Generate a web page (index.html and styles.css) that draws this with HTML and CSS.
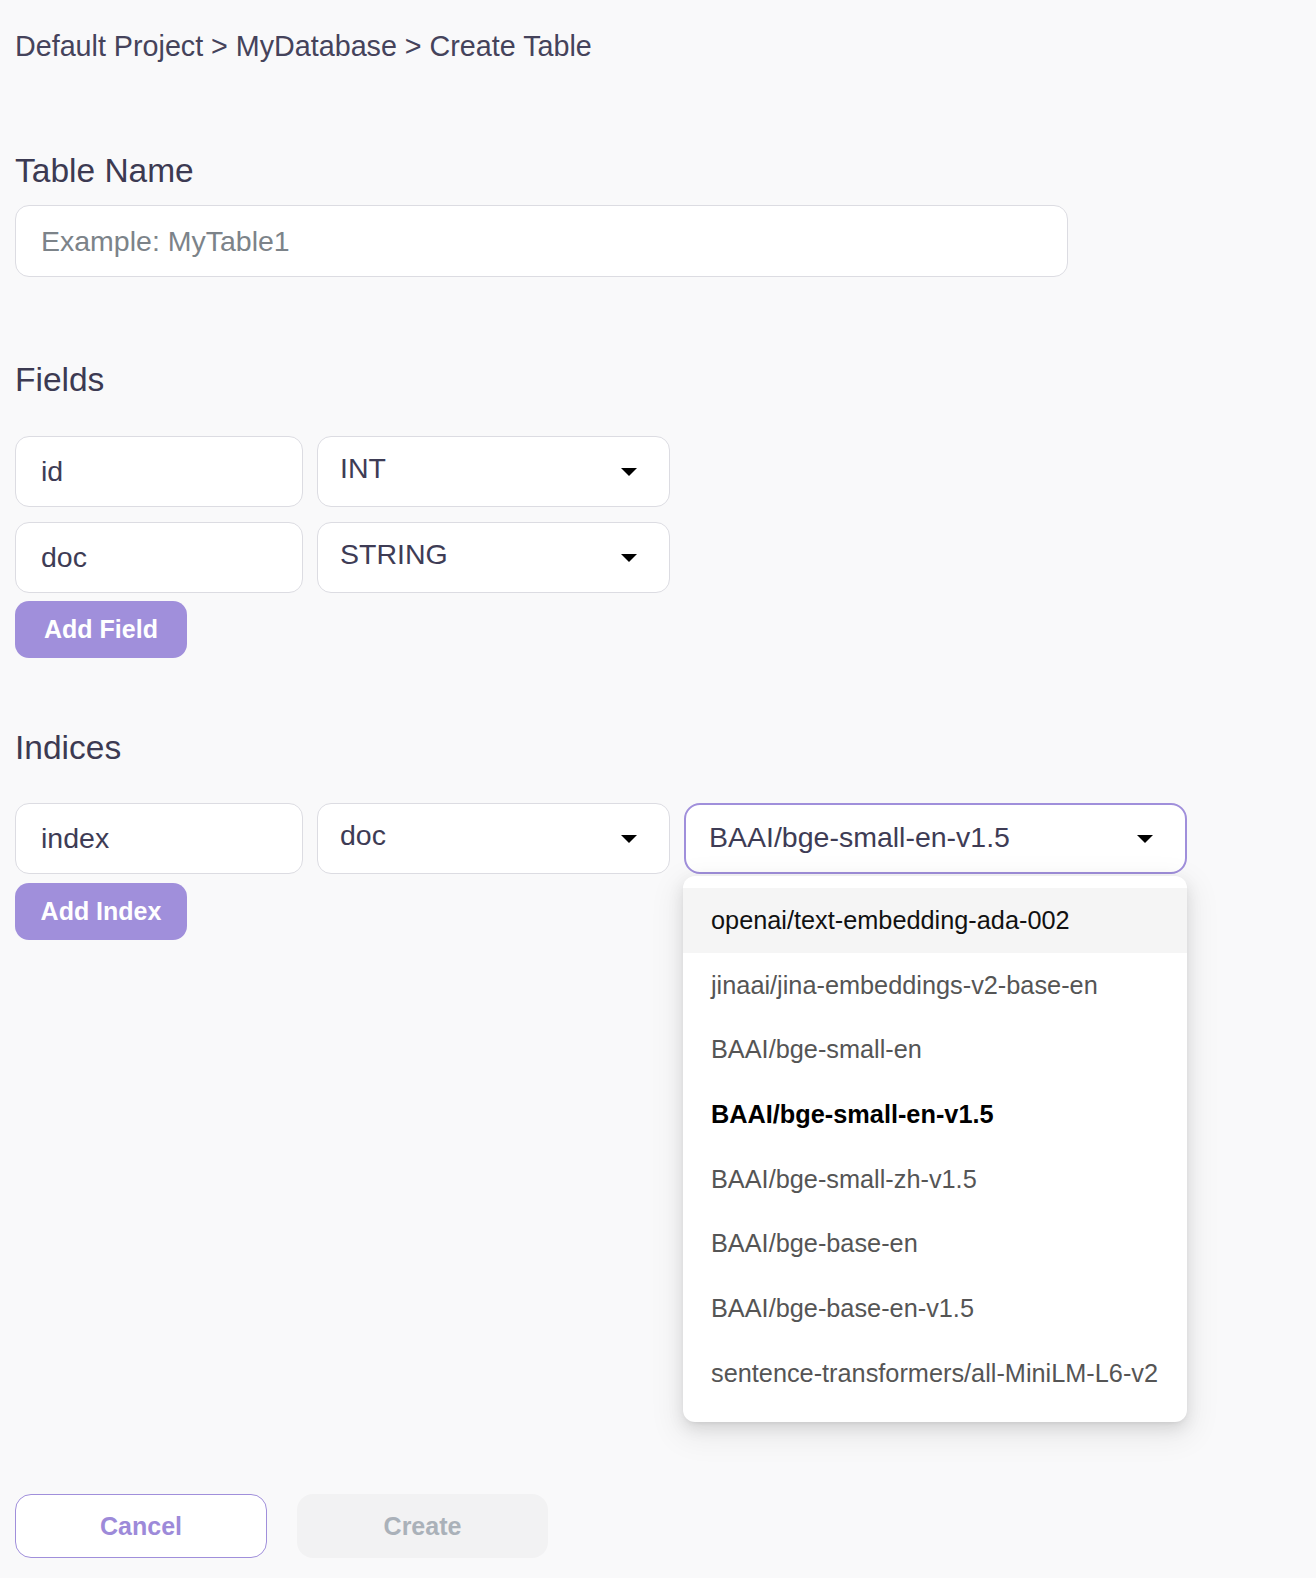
FILE: index.html
```html
<!DOCTYPE html>
<html lang="en">
<head>
<meta charset="utf-8">
<title>Create Table</title>
<link rel="stylesheet" href="styles.css">
</head>
<body>
<div class="page">
  <div class="breadcrumb">Default Project &gt; MyDatabase &gt; Create Table</div>

  <h2 class="heading heading-table">Table Name</h2>
  <input class="text-input table-input" type="text" placeholder="Example: MyTable1">

  <h2 class="heading heading-fields">Fields</h2>
  <div class="rows">
    <div class="row">
      <input class="text-input name-input" type="text" value="id">
      <div class="select type-select"><span class="select-value">INT</span><svg class="caret" width="16" height="8" viewBox="0 0 16 8"><path d="M0 0H16L8 8Z"/></svg></div>
    </div>
    <div class="row">
      <input class="text-input name-input" type="text" value="doc">
      <div class="select type-select"><span class="select-value">STRING</span><svg class="caret" width="16" height="8" viewBox="0 0 16 8"><path d="M0 0H16L8 8Z"/></svg></div>
    </div>
  </div>
  <button class="btn-add btn-add-field" type="button">Add Field</button>

  <h2 class="heading heading-indices">Indices</h2>
  <div class="row index-row">
    <input class="text-input name-input" type="text" value="index">
    <div class="select type-select"><span class="select-value">doc</span><svg class="caret" width="16" height="8" viewBox="0 0 16 8"><path d="M0 0H16L8 8Z"/></svg></div>
    <div class="model-wrap">
      <div class="select model-select"><span class="select-value model-value">BAAI/bge-small-en-v1.5</span><svg class="caret" width="16" height="8" viewBox="0 0 16 8"><path d="M0 0H16L8 8Z"/></svg></div>
      <ul class="dropdown">
        <li class="option option-hover">openai/text-embedding-ada-002</li>
        <li class="option">jinaai/jina-embeddings-v2-base-en</li>
        <li class="option">BAAI/bge-small-en</li>
        <li class="option option-selected">BAAI/bge-small-en-v1.5</li>
        <li class="option">BAAI/bge-small-zh-v1.5</li>
        <li class="option">BAAI/bge-base-en</li>
        <li class="option">BAAI/bge-base-en-v1.5</li>
        <li class="option">sentence-transformers/all-MiniLM-L6-v2</li>
      </ul>
    </div>
  </div>
  <button class="btn-add btn-add-index" type="button">Add Index</button>

  <div class="actions">
    <button class="btn-cancel" type="button">Cancel</button>
    <button class="btn-create" type="button" disabled>Create</button>
  </div>
</div>
</body>
</html>
```

FILE: styles.css
```css
* {
  box-sizing: border-box;
}

html, body {
  margin: 0;
  background: #f9f9fa;
}

body {
  font-family: "Liberation Sans", Arial, Helvetica, sans-serif;
  color: #3e3c55;
  min-height: 1578px;
}

.page {
  padding: 26px 15px 0;
}

.breadcrumb {
  font-size: 28.7px;
  line-height: 40px;
  color: #45435b;
}

.heading {
  margin: 0;
  font-weight: 400;
  font-size: 33.5px;
  line-height: 40px;
  color: #3c3a52;
}

.heading-table {
  margin-top: 85px;
}

.heading-fields {
  margin-top: 83px;
}

.heading-indices {
  margin-top: 70px;
}

.text-input {
  display: block;
  font-family: "Liberation Sans", Arial, Helvetica, sans-serif;
  font-size: 28.5px;
  color: #3e3c55;
  background: #ffffff;
  border: 1px solid #dcdce2;
  border-radius: 14px;
  padding: 0 25px;
  outline: none;
  margin: 0;
}

.text-input::placeholder {
  color: #7c8389;
}

.table-input {
  margin-top: 14px;
  width: 1053px;
  height: 72px;
}

.rows {
  margin-top: 36px;
  display: flex;
  flex-direction: column;
  gap: 15px;
}

.row {
  display: flex;
  gap: 14px;
  height: 71px;
}

.name-input {
  width: 288px;
  height: 71px;
}

.select {
  display: flex;
  align-items: center;
  justify-content: space-between;
  background: #ffffff;
  border: 1px solid #dcdce2;
  border-radius: 14px;
  height: 71px;
  font-size: 28.5px;
  color: #3e3c55;
}

.type-select {
  width: 353px;
  padding: 0 32px 0 22px;
}

.select-value {
  position: relative;
  top: -3px;
}

.caret {
  display: block;
  fill: #000000;
  flex: none;
}

.model-wrap {
  position: relative;
  width: 503px;
}

.model-select {
  width: 503px;
  border: 2px solid #a08fdb;
  border-radius: 16px;
  padding: 0 32px 0 23px;
}

.model-value {
  top: -1px;
}

.dropdown {
  position: absolute;
  left: -1px;
  top: 73px;
  width: 504px;
  margin: 0;
  padding: 12px 0 16px;
  list-style: none;
  background: #ffffff;
  border-radius: 12px;
  box-shadow: 0 6px 16px 0 rgba(0, 0, 0, 0.10), 0 3px 6px -4px rgba(0, 0, 0, 0.14), 0 10px 30px 8px rgba(0, 0, 0, 0.06);
  z-index: 10;
}

.option {
  height: 64.7px;
  display: flex;
  align-items: center;
  padding-left: 28px;
  font-size: 25.3px;
  color: #555555;
}

.option-hover {
  background: #f5f5f5;
  color: #111111;
}

.option-selected {
  font-weight: 700;
  color: #000000;
}

.btn-add {
  display: block;
  width: 172px;
  height: 57px;
  border: none;
  border-radius: 14px;
  background: #a08fdb;
  color: #ffffff;
  font-family: "Liberation Sans", Arial, Helvetica, sans-serif;
  font-weight: 700;
  font-size: 25px;
  padding: 0;
}

.btn-add-field {
  margin-top: 8px;
}

.index-row {
  margin-top: 35px;
}

.btn-add-index {
  margin-top: 9px;
}

.actions {
  margin-top: 554px;
  display: flex;
  gap: 30px;
}

.btn-cancel,
.btn-create {
  width: 252px;
  height: 64px;
  border-radius: 16px;
  font-family: "Liberation Sans", Arial, Helvetica, sans-serif;
  font-weight: 700;
  font-size: 25px;
  padding: 0;
}

.btn-cancel {
  background: #ffffff;
  border: 1.5px solid #a08fdb;
  color: #9d8ad9;
}

.btn-create {
  background: #f2f2f3;
  border: none;
  color: #aab1b9;
  width: 251px;
}
```
